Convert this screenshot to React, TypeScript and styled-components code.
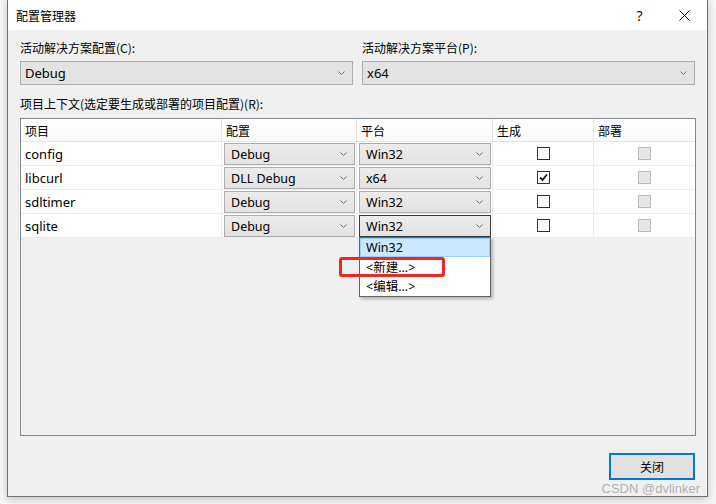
import React from 'react';
import styled, { createGlobalStyle } from 'styled-components';

const Global = createGlobalStyle`
  html, body {
    margin: 0;
    padding: 0;
    background: #f6f6f6;
  }
  body {
    font-family: "Noto Sans", "Noto Sans CJK SC", sans-serif;
    font-size: 12px;
    color: #000;
  }
`;

const Page = styled.div`
  padding-left: 7px;
  width: 716px;
  height: 504px;
  box-sizing: border-box;
  overflow: hidden;
`;

const Window = styled.div`
  position: relative;
  width: 701px;
  height: 497px;
  box-sizing: border-box;
  border: 1px solid #6f6f6f;
  border-top: none;
  background: #f0f0f0;
  box-shadow: 0 2px 8px rgba(0, 0, 0, 0.22);
  display: flex;
  flex-direction: column;
`;

const TitleBar = styled.div`
  height: 30px;
  background: #fff;
  display: flex;
  align-items: center;
  padding-left: 8px;
  font-family: "Noto Sans CJK SC", sans-serif;
  font-size: 12px;
`;

const TitleText = styled.div`
  flex: 1;
`;

const TitleButton = styled.div`
  width: 45px;
  height: 30px;
  display: flex;
  align-items: center;
  justify-content: center;
  font-family: "Noto Sans", sans-serif;
  font-size: 14px;
  color: #111;
`;

const Body = styled.div`
  flex: 1;
  padding: 0 11px 0 12px;
  display: flex;
  flex-direction: column;
`;

const TopGrid = styled.div`
  display: grid;
  grid-template-columns: 333px 333px;
  column-gap: 9px;
  margin-top: 10px;
`;

const Field = styled.div`
  display: flex;
  flex-direction: column;
`;

const Label = styled.div<{ $mt?: number }>`
  height: 16px;
  line-height: 16px;
  margin-top: ${(p) => p.$mt ?? 0}px;
  font-family: "Noto Sans CJK SC", sans-serif;
  font-size: 12px;
`;

const Combo = styled.div<{ $h: number; $focus?: boolean }>`
  position: relative;
  height: ${(p) => p.$h}px;
  box-sizing: border-box;
  border: 1px solid ${(p) => (p.$focus ? '#3a3a3a' : '#adadad')};
  background: linear-gradient(#ececec, #e2e2e2);
  display: flex;
  align-items: center;
  padding: 0 7px 0 6px;
  font-size: 12.5px;
`;

const BigCombo = styled(Combo)`
  margin-top: 5px;
  background: #e3e3e3;
  padding-left: 4px;
  font-size: 13px;
`;

const ComboText = styled.span`
  flex: 1;
`;

const Chevron = () => (
  <svg width="7" height="4" viewBox="0 0 7 4">
    <path d="M0.5 0.5 L3.5 3.5 L6.5 0.5" fill="none" stroke="#707070" strokeWidth="1" />
  </svg>
);

const Table = styled.div`
  margin-top: 6px;
  height: 318px;
  box-sizing: border-box;
  border: 1px solid #828790;
  background: #f0f0f0;
  display: grid;
  grid-template-columns: 201px 135px 136px 101px 101px;
  grid-auto-rows: min-content;
`;

const HeadCell = styled.div`
  height: 23px;
  box-sizing: border-box;
  background: linear-gradient(#ffffff, #fafafa);
  border-right: 1px solid #e5e5e5;
  border-bottom: 1px solid #e5e5e5;
  display: flex;
  align-items: center;
  padding-left: 4px;
  font-family: "Noto Sans CJK SC", sans-serif;
  font-size: 12px;
  &:nth-child(5) {
    border-right: none;
  }
`;

const Cell = styled.div<{ $center?: boolean; $last?: boolean }>`
  position: relative;
  height: 24px;
  box-sizing: border-box;
  background: #fff;
  border-right: ${(p) => (p.$last ? 'none' : '1px solid #ececec')};
  border-bottom: 1px solid #ececec;
  display: flex;
  align-items: ${(p) => (p.$center ? 'center' : 'stretch')};
  justify-content: ${(p) => (p.$center ? 'center' : 'flex-start')};
  padding: ${(p) => (p.$center ? '0' : '1px 1px 0 2px')};
`;

const NameCell = styled(Cell)`
  align-items: center;
  padding-left: 4px;
  font-size: 13px;
`;

const CellCombo = styled(Combo)`
  flex: 1;
  margin-bottom: 1px;
`;

const Check = styled.div<{ $disabled?: boolean }>`
  width: 13px;
  height: 13px;
  box-sizing: border-box;
  border: 1px solid ${(p) => (p.$disabled ? '#bcbcbc' : '#333')};
  background: ${(p) => (p.$disabled ? '#e6e6e6' : '#fff')};
  display: flex;
  align-items: center;
  justify-content: center;
`;

const DropList = styled.div`
  position: absolute;
  left: -1px;
  top: 21px;
  width: 132px;
  box-sizing: border-box;
  background: #fff;
  border: 1px solid #646464;
  box-shadow: 2px 2px 3px rgba(0, 0, 0, 0.25);
  z-index: 5;
  padding-bottom: 1px;
`;

const DropItem = styled.div<{ $sel?: boolean }>`
  height: 19px;
  box-sizing: border-box;
  border: 1px solid ${(p) => (p.$sel ? '#99d1ff' : 'transparent')};
  background: ${(p) => (p.$sel ? '#cce8ff' : 'transparent')};
  display: flex;
  align-items: center;
  padding-left: 5px;
  font-size: 12.5px;
`;

const Highlight = styled.div`
  position: absolute;
  left: -21px;
  top: 19px;
  width: 106px;
  height: 20px;
  box-sizing: border-box;
  border: 3px solid #f42525;
  border-radius: 3px;
`;

const Footer = styled.div`
  display: flex;
  justify-content: flex-end;
  margin-top: 17px;
  padding-right: 1px;
`;

const Button = styled.div`
  width: 86px;
  height: 27px;
  box-sizing: border-box;
  border: 2px solid #0078d7;
  background: #e1e1e1;
  display: flex;
  align-items: center;
  justify-content: center;
  font-family: "Noto Sans CJK SC", sans-serif;
  font-size: 12px;
`;

const Watermark = styled.div`
  position: absolute;
  right: 7px;
  bottom: 0px;
  font-family: "Liberation Sans", Arial, sans-serif;
  font-size: 13px;
  color: rgba(140, 140, 140, 0.65);
`;

type Row = { name: string; config: string; platform: string; build: boolean };

const rows: Row[] = [
  { name: 'config', config: 'Debug', platform: 'Win32', build: false },
  { name: 'libcurl', config: 'DLL Debug', platform: 'x64', build: true },
  { name: 'sdltimer', config: 'Debug', platform: 'Win32', build: false },
  { name: 'sqlite', config: 'Debug', platform: 'Win32', build: false },
];

const CheckMark = () => (
  <svg width="9" height="9" viewBox="0 0 9 9">
    <path d="M1 4.5 L3.5 7 L8 1.5" fill="none" stroke="#111" strokeWidth="1.8" />
  </svg>
);

export default function App() {
  return (
    <Page>
      <Global />
      <Window>
        <TitleBar>
          <TitleText>配置管理器</TitleText>
          <TitleButton>?</TitleButton>
          <TitleButton>
            <svg width="11" height="11" viewBox="0 0 11 11">
              <path d="M0.5 0.5 L10.5 10.5 M10.5 0.5 L0.5 10.5" stroke="#111" strokeWidth="1" />
            </svg>
          </TitleButton>
        </TitleBar>
        <Body>
          <TopGrid>
            <Field>
              <Label>活动解决方案配置(C):</Label>
              <BigCombo $h={24}>
                <ComboText>Debug</ComboText>
                <Chevron />
              </BigCombo>
            </Field>
            <Field>
              <Label>活动解决方案平台(P):</Label>
              <BigCombo $h={24}>
                <ComboText>x64</ComboText>
                <Chevron />
              </BigCombo>
            </Field>
          </TopGrid>
          <Label $mt={11}>项目上下文(选定要生成或部署的项目配置)(R):</Label>
          <Table>
            <HeadCell>项目</HeadCell>
            <HeadCell>配置</HeadCell>
            <HeadCell>平台</HeadCell>
            <HeadCell>生成</HeadCell>
            <HeadCell>部署</HeadCell>
            {rows.map((r, i) => {
              const open = i === rows.length - 1;
              return (
                <React.Fragment key={r.name}>
                  <NameCell>{r.name}</NameCell>
                  <Cell>
                    <CellCombo $h={22}>
                      <ComboText>{r.config}</ComboText>
                      <Chevron />
                    </CellCombo>
                  </Cell>
                  <Cell>
                    <CellCombo $h={22} $focus={open}>
                      <ComboText>{r.platform}</ComboText>
                      <Chevron />
                      {open && (
                        <DropList>
                          <DropItem $sel>Win32</DropItem>
                          <DropItem>&lt;新建...&gt;</DropItem>
                          <DropItem>&lt;编辑...&gt;</DropItem>
                          <Highlight />
                        </DropList>
                      )}
                    </CellCombo>
                  </Cell>
                  <Cell $center>
                    <Check>{r.build && <CheckMark />}</Check>
                  </Cell>
                  <Cell $center $last>
                    <Check $disabled />
                  </Cell>
                </React.Fragment>
              );
            })}
          </Table>
          <Footer>
            <Button>关闭</Button>
          </Footer>
        </Body>
        <Watermark>CSDN @dvlinker</Watermark>
      </Window>
    </Page>
  );
}
